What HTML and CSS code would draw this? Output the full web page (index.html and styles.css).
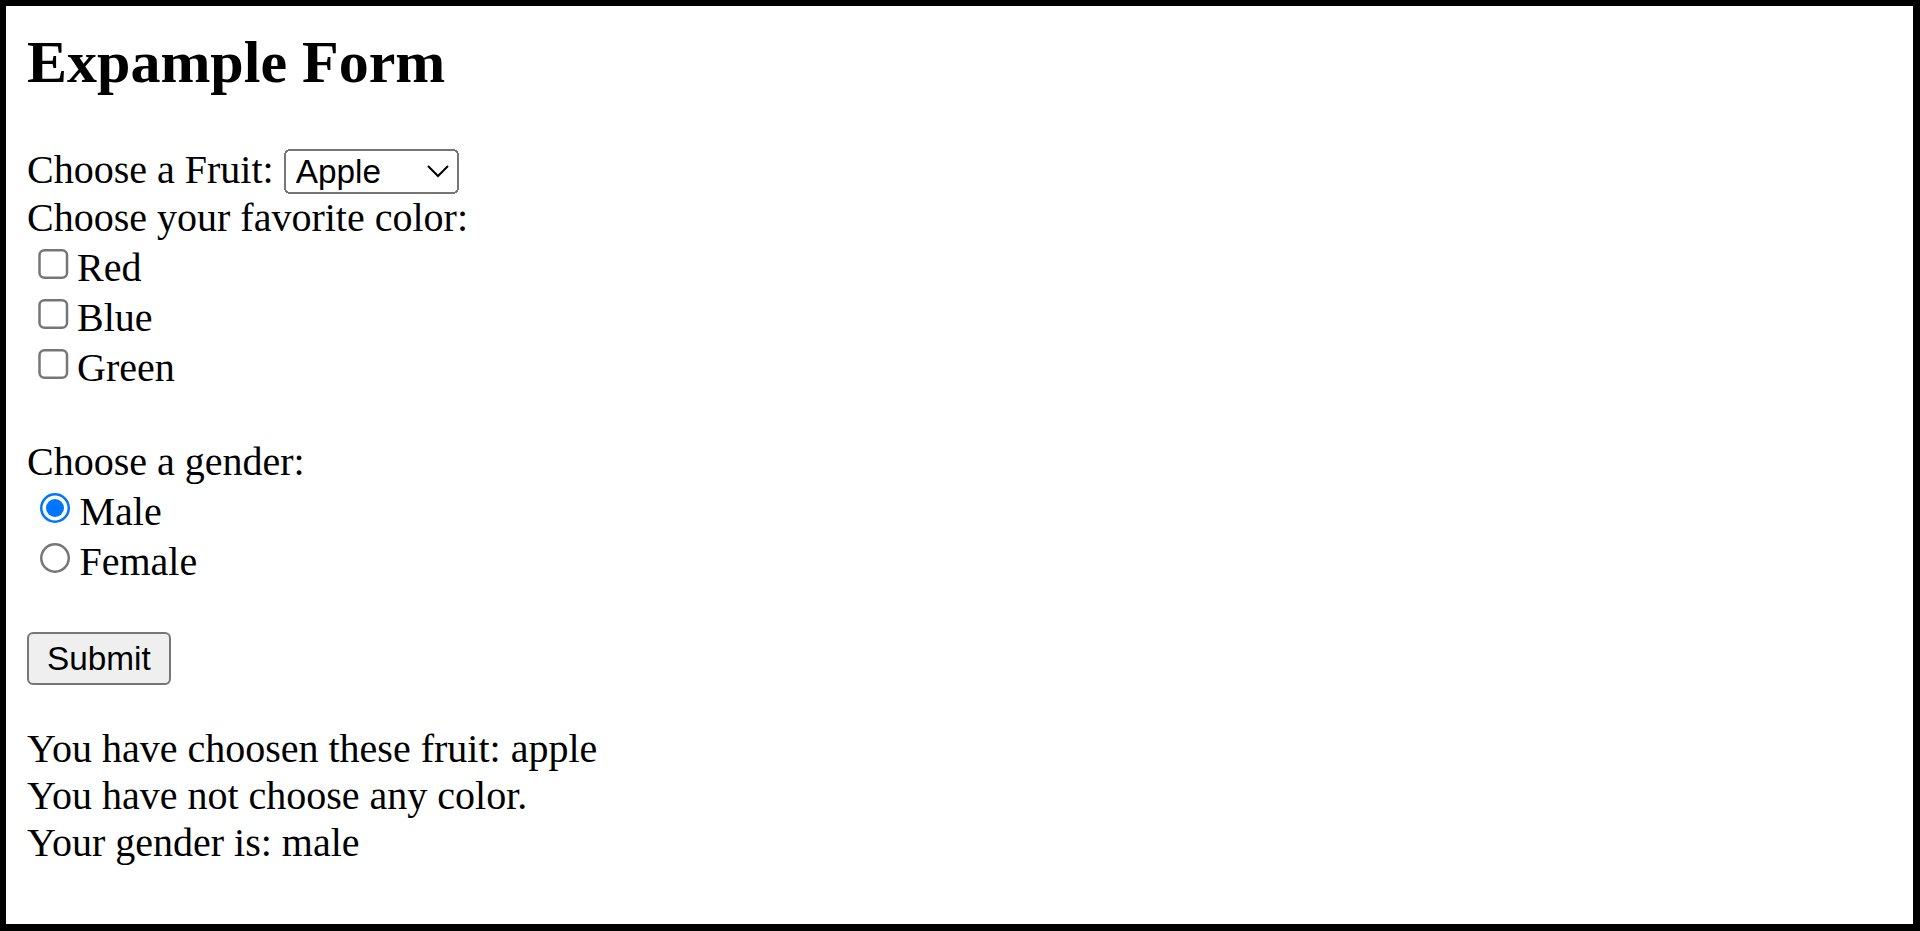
FILE: index.html
```html
<!DOCTYPE html>
<html lang="en">
<head>
<meta charset="utf-8">
<title>Expample Form</title>
<link rel="stylesheet" href="styles.css">
</head>
<body>
<div class="page">
  <h2 class="title">Expample Form</h2>
  <form class="form">
    <label class="label" for="fruit">Choose a Fruit:</label>
    <select class="select" id="fruit">
      <option selected>Apple</option>
      <option>Banana</option>
      <option>Orange</option>
    </select><br>
    <span class="label">Choose your favorite color:</span><br>
    <input class="check" type="checkbox" id="red"><label for="red">Red</label><br>
    <input class="check" type="checkbox" id="blue"><label for="blue">Blue</label><br>
    <input class="check" type="checkbox" id="green"><label for="green">Green</label><br>
    <br>
    <span class="label">Choose a gender:</span><br>
    <input class="radio" type="radio" name="gender" id="male" checked><label for="male">Male</label><br>
    <input class="radio" type="radio" name="gender" id="female"><label for="female">Female</label><br>
    <br>
    <button class="button" type="button">Submit</button>
  </form>
  <p class="result">You have choosen these fruit: apple<br>You have not choose any color.<br>Your gender is: male</p>
</div>
</body>
</html>
```

FILE: styles.css
```css
html {
  background: #000;
  height: 100%;
}
body {
  margin: 6px 7px 7px 6px;
  height: calc(100% - 13px);
  background: #fff;
  overflow: hidden;
}
.page {
  zoom: 2.5;
  padding: 8.6px 0 0 8.4px;
  font-family: "Liberation Serif", "Times New Roman", serif;
  font-size: 16px;
  color: #000;
}
.title {
  margin: 0 0 0.83em;
  font-size: 1.5em;
  font-weight: bold;
}
.form {
  margin: 0;
}
.select,
.button {
  font-family: "Liberation Sans", Arial, sans-serif;
  font-size: 13.333px;
}
.select {
  width: 70px;
}
.result {
  margin: 16px 0 0;
}
```
